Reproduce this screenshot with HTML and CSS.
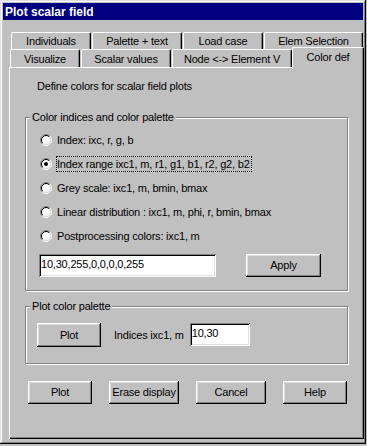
FILE: index.html
```html
<!DOCTYPE html>
<html>
<head>
<meta charset="utf-8">
<title>Plot scalar field</title>
<link rel="stylesheet" href="styles.css">
</head>
<body>
<div class="window">
  <div class="titlebar">Plot scalar field</div>
  <div class="tabs">
    <div class="tabrow row1">
      <div class="tab w80">Individuals</div>
      <div class="tab w90">Palette + text</div>
      <div class="tab w80">Load case</div>
      <div class="tab w99">Elem Selection</div>
    </div>
    <div class="tabrow row2">
      <div class="tab w70">Visualize</div>
      <div class="tab w90">Scalar values</div>
      <div class="tab w120">Node &lt;-&gt; Element V</div>
      <div class="tab selected w72">Color def</div>
    </div>
  </div>
  <div class="panel">
    <p class="desc">Define colors for scalar field plots</p>
    <fieldset class="group g1">
      <legend>Color indices and color palette</legend>
      <div class="radio-list">
        <div class="radio">
          <svg class="rb" width="12" height="12" viewBox="0 0 12 12"><path d="M2.11 9.89A5.5 5.5 0 0 1 9.89 2.11" fill="none" stroke="#808080"/><path d="M9.89 2.11A5.5 5.5 0 0 1 2.11 9.89" fill="none" stroke="#fff"/><circle cx="6" cy="6" r="4" fill="#fff"/><path d="M2.82 9.18A4.5 4.5 0 0 1 9.18 2.82" fill="none" stroke="#000"/><path d="M9.18 2.82A4.5 4.5 0 0 1 2.82 9.18" fill="none" stroke="#dfdfdf"/></svg>
          <span>Index: ixc, r, g, b</span>
        </div>
        <div class="radio focus">
          <svg class="rb" width="12" height="12" viewBox="0 0 12 12"><path d="M2.11 9.89A5.5 5.5 0 0 1 9.89 2.11" fill="none" stroke="#808080"/><path d="M9.89 2.11A5.5 5.5 0 0 1 2.11 9.89" fill="none" stroke="#fff"/><circle cx="6" cy="6" r="4" fill="#fff"/><path d="M2.82 9.18A4.5 4.5 0 0 1 9.18 2.82" fill="none" stroke="#000"/><path d="M9.18 2.82A4.5 4.5 0 0 1 2.82 9.18" fill="none" stroke="#dfdfdf"/><circle cx="6" cy="6" r="2" fill="#000"/></svg>
          <span>Index range ixc1, m, r1, g1, b1, r2, g2, b2</span>
        </div>
        <div class="radio">
          <svg class="rb" width="12" height="12" viewBox="0 0 12 12"><path d="M2.11 9.89A5.5 5.5 0 0 1 9.89 2.11" fill="none" stroke="#808080"/><path d="M9.89 2.11A5.5 5.5 0 0 1 2.11 9.89" fill="none" stroke="#fff"/><circle cx="6" cy="6" r="4" fill="#fff"/><path d="M2.82 9.18A4.5 4.5 0 0 1 9.18 2.82" fill="none" stroke="#000"/><path d="M9.18 2.82A4.5 4.5 0 0 1 2.82 9.18" fill="none" stroke="#dfdfdf"/></svg>
          <span>Grey scale: ixc1, m, bmin, bmax</span>
        </div>
        <div class="radio">
          <svg class="rb" width="12" height="12" viewBox="0 0 12 12"><path d="M2.11 9.89A5.5 5.5 0 0 1 9.89 2.11" fill="none" stroke="#808080"/><path d="M9.89 2.11A5.5 5.5 0 0 1 2.11 9.89" fill="none" stroke="#fff"/><circle cx="6" cy="6" r="4" fill="#fff"/><path d="M2.82 9.18A4.5 4.5 0 0 1 9.18 2.82" fill="none" stroke="#000"/><path d="M9.18 2.82A4.5 4.5 0 0 1 2.82 9.18" fill="none" stroke="#dfdfdf"/></svg>
          <span>Linear distribution : ixc1, m, phi, r, bmin, bmax</span>
        </div>
        <div class="radio">
          <svg class="rb" width="12" height="12" viewBox="0 0 12 12"><path d="M2.11 9.89A5.5 5.5 0 0 1 9.89 2.11" fill="none" stroke="#808080"/><path d="M9.89 2.11A5.5 5.5 0 0 1 2.11 9.89" fill="none" stroke="#fff"/><circle cx="6" cy="6" r="4" fill="#fff"/><path d="M2.82 9.18A4.5 4.5 0 0 1 9.18 2.82" fill="none" stroke="#000"/><path d="M9.18 2.82A4.5 4.5 0 0 1 2.82 9.18" fill="none" stroke="#dfdfdf"/></svg>
          <span>Postprocessing colors: ixc1, m</span>
        </div>
      </div>
      <div class="input-row">
        <div class="field wide">10,30,255,0,0,0,0,255</div>
        <button class="btn apply">Apply</button>
      </div>
    </fieldset>
    <fieldset class="group g2">
      <legend>Plot color palette</legend>
      <div class="plot-row">
        <button class="btn plot">Plot</button>
        <span class="lbl">Indices ixc1, m</span>
        <div class="field narrow">10,30</div>
      </div>
    </fieldset>
    <div class="buttons">
      <button class="btn b64">Plot</button>
      <button class="btn b70">Erase display</button>
      <button class="btn b70">Cancel</button>
      <button class="btn b64">Help</button>
    </div>
  </div>
</div>
</body>
</html>
```

FILE: styles.css
```css
body {
  margin: 0;
  background: #c0c0c0;
  font-family: "Liberation Sans", Arial, sans-serif;
  font-size: 11px;
  line-height: 13px;
  letter-spacing: -0.2px;
  color: #000;
}

.window {
  box-sizing: border-box;
  width: 366px;
  height: 444px;
  padding: 3px;
  background: #c0c0c0;
  box-shadow: inset -1px -1px #000, inset 1px 1px #dfdfdf, inset -2px -2px #808080, inset 2px 2px #fff;
  display: flex;
  flex-direction: column;
}

.titlebar {
  height: 16px;
  padding: 1px 0 0 2px;
  background: #000080;
  color: #fff;
  font-weight: bold;
  font-size: 12px;
  line-height: 16px;
  letter-spacing: 0;
}

.tabs {
  margin-top: 12px;
}

.tabrow {
  display: flex;
  gap: 1px;
  align-items: flex-start;
}

.row1 {
  height: 17px;
  margin-left: 8px;
}

.row2 {
  height: 18px;
  margin-left: 7px;
}

.tab {
  box-sizing: border-box;
  flex: none;
  border-top: 1px solid #fff;
  border-left: 1px solid #fff;
  border-right: 1px solid #000;
  border-radius: 2px 2px 0 0;
  box-shadow: inset -1px 0 #808080;
  background: #c0c0c0;
  text-align: center;
  white-space: nowrap;
}

.row1 .tab {
  height: 17px;
  padding-top: 2px;
}

.row2 .tab {
  height: 18px;
  padding-top: 3px;
}

.row2 .tab.selected {
  position: relative;
  z-index: 1;
  height: 22px;
  margin-top: -2px;
  margin-left: -1px;
  padding-top: 3px;
}

.w70 { width: 70px; }
.w72 { width: 72px; }
.w80 { width: 80px; }
.w90 { width: 90px; }
.w99 { width: 99px; }
.w120 { width: 120px; }

.panel {
  box-sizing: border-box;
  width: 355px;
  height: 372px;
  margin-left: 6px;
  box-shadow: inset 1px 1px #fff, inset -1px -1px #000, inset -2px -2px #808080;
  display: flex;
  flex-direction: column;
  align-items: flex-start;
}

.desc {
  margin: 13px 0 0 28px;
}

.group {
  box-sizing: border-box;
  width: 323px;
  min-width: 0;
  margin: 18px 0 0 16px;
  border: 1px solid #808080;
  box-shadow: inset 1px 1px #fff, 1px 1px #fff;
}

.group legend {
  margin-left: 4px;
  padding: 0 2px;
  line-height: 13px;
  background: #c0c0c0;
}

.g1 {
  padding: 4px 0 13px 0;
}

.g2 {
  margin-top: 9px;
  padding: 10px 0 16px 0;
}

.radio {
  display: flex;
  align-items: center;
  height: 24px;
  padding-left: 14px;
}

.rb {
  flex: none;
  margin-right: 4px;
}

.radio span {
  border: 1px dotted transparent;
  padding-right: 1px;
  line-height: 14px;
  white-space: nowrap;
}

.radio.focus span {
  border-color: #000;
}

.input-row {
  display: flex;
  margin-top: 6px;
  padding-left: 13px;
}

.field {
  box-sizing: border-box;
  height: 23px;
  padding: 4px 2px 0;
  background: #fff;
  box-shadow: inset 1px 1px #808080, inset -1px -1px #fff, inset 2px 2px #000, inset -2px -2px #dfdfdf;
  white-space: nowrap;
}

.field.wide { width: 177px; }
.field.narrow { width: 60px; margin-left: 6px; }

.btn {
  box-sizing: border-box;
  height: 23px;
  padding: 0;
  border: 0;
  background: #c0c0c0;
  color: #000;
  font: inherit;
  letter-spacing: inherit;
  box-shadow: inset -1px -1px #000, inset 1px 1px #fff, inset -2px -2px #808080, inset 2px 2px #dfdfdf;
}

.btn.apply {
  width: 75px;
  margin-left: 30px;
}

.plot-row {
  display: flex;
  align-items: flex-start;
  padding-left: 11px;
}

.btn.plot {
  width: 64px;
  height: 24px;
}

.lbl {
  margin-left: 13px;
  line-height: 24px;
  white-space: nowrap;
}

.buttons {
  display: flex;
  gap: 17px;
  margin: 17px 0 0 19px;
}

.b64 { width: 64px; }
.b70 { width: 70px; }
```
